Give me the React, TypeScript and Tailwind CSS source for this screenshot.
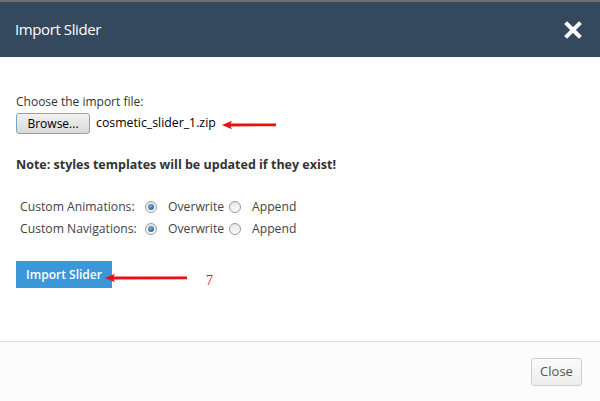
import React from "react";

const Arrow = ({ width }: { width: number }) => (
  <svg width={width} height="10" viewBox={`0 0 ${width} 10`}>
    <path d={`M1 5 L11 0.8 L9.5 3.6 L${width - 1} 3.4 L${width - 1} 6.2 L9.5 6.4 L11 9.2 Z`} fill="#e81010" />
  </svg>
);

const Radio = ({ checked }: { checked?: boolean }) => (
  <span className="inline-flex w-[12px] h-[12px] rounded-full border border-[#9a9a9a] bg-gradient-to-b from-[#e6e6e6] to-[#fdfdfd] items-center justify-center">
    {checked && <span className="w-[6px] h-[6px] rounded-full bg-[radial-gradient(circle_at_40%_35%,#6fb3e8,#11497a)]" />}
  </span>
);

const Row = ({ label }: { label: string }) => (
  <div className="flex items-center h-[22px]">
    <span className="w-[125px]">{label}</span>
    <Radio checked />
    <span className="ml-[11px] w-[61px]">Overwrite</span>
    <Radio />
    <span className="ml-[11px]">Append</span>
  </div>
);

export default function App() {
  return (
    <div className="w-[600px] h-[401px] bg-white flex flex-col border-t-2 border-[#6f6f6f] text-[#333]" style={{ fontFamily: '"Open Sans", sans-serif' }}>
      <div className="h-[55px] bg-[#34495e] flex items-center justify-between pl-[15px] pr-[18px] shrink-0">
        <span className="text-white text-[15px] tracking-[-0.4px]">Import Slider</span>
        <svg width="18" height="18" viewBox="0 0 18 18">
          <path d="M3 3 L15 15 M15 3 L3 15" stroke="white" strokeWidth="4" strokeLinecap="square" />
        </svg>
      </div>

      <div className="flex-1 px-[16px] pt-[37px] text-[12px]">
        <div className="leading-[16px]">Choose the import file:</div>
        <div className="flex items-center mt-[3px]">
          <button className="h-[21px] w-[74px] border border-[#7aa7c7] rounded-[3px] bg-gradient-to-b from-[#f2f2f2] to-[#d8d8d8] text-[12px] text-black">
            Browse...
          </button>
          <span className="ml-[6px] text-[12.3px] text-black">cosmetic_slider_1.zip</span>
          <span className="ml-[5px] mt-[2px]"><Arrow width={56} /></span>
        </div>

        <div className="mt-[22px] font-bold text-[12.5px]">Note: styles templates will be updated if they exist!</div>

        <div className="mt-[21px] pl-[4px] text-[12.2px] text-[#444]">
          <Row label="Custom Animations:" />
          <Row label="Custom Navigations:" />
        </div>

        <div className="flex items-center mt-[19px]">
          <button className="h-[27px] w-[96px] bg-[#3a97d9] text-white text-[12px] font-semibold">
            Import Slider
          </button>
          <span className="-ml-[8px] mt-[7px]"><Arrow width={84} /></span>
          <span className="ml-[18px] mt-[11px] text-[#e81010] text-[14px]" style={{ fontFamily: '"Liberation Serif", serif' }}>7</span>
        </div>
      </div>

      <div className="h-[60px] border-t border-[#dcdcdc] bg-[#fcfcfc] flex items-center justify-end pr-[18px] shrink-0">
        <button className="h-[28px] w-[51px] border border-[#cfcfcf] rounded-[3px] bg-gradient-to-b from-[#fafafa] to-[#eeeeee] text-[13px] text-[#555]">
          Close
        </button>
      </div>
    </div>
  );
}
